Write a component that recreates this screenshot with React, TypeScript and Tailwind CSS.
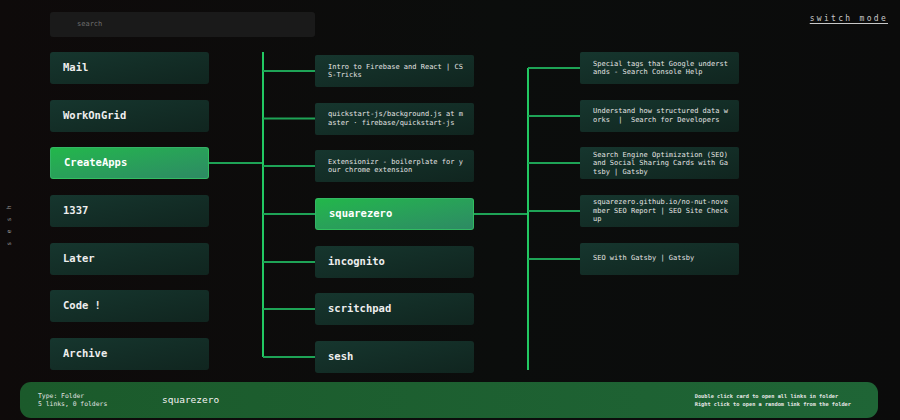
import React from "react";

const folders = ["Mail", "WorkOnGrid", "CreateApps", "1337", "Later", "Code !", "Archive"];
const subFolders = [
  { name: "Intro to Firebase and React | CSS-Tricks", link: true },
  { name: "quickstart-js/background.js at master · firebase/quickstart-js", link: true },
  { name: "Extensionizr - boilerplate for your chrome extension", link: true },
  { name: "squarezero", link: false },
  { name: "incognito", link: false },
  { name: "scritchpad", link: false },
  { name: "sesh", link: false },
];
const links = [
  "Special tags that Google understands - Search Console Help",
  "Understand how structured data works  |  Search for Developers",
  "Search Engine Optimization (SEO) and Social Sharing Cards with Gatsby | Gatsby",
  "squarezero.github.io/no-nut-november SEO Report | SEO Site Checkup",
  "SEO with Gatsby | Gatsby",
];

const mono = "font-['DejaVu_Sans_Mono',monospace]";

function FolderCard({ name, active }: { name: string; active?: boolean }) {
  return (
    <div
      className={`h-[32px] w-[159px] rounded-[3px] flex items-center pl-[13px] text-[10.5px] font-bold ${
        active
          ? "bg-gradient-to-br from-[#22b74a] to-[#2d8a63] border border-[#3bc86a]/60 text-white"
          : "bg-gradient-to-br from-[#16362e] to-[#10251f] text-[#eeeeee]"
      }`}
    >
      {name}
    </div>
  );
}

function LinkCard({ title }: { title: string }) {
  return (
    <div className="h-[32px] w-[159px] rounded-[2px] flex items-center pl-[13px] pr-[10px] bg-gradient-to-br from-[#16362e] to-[#10251f]">
      <p className="text-[7px] leading-[8.5px] text-[#e4e4e4] break-all whitespace-pre-wrap">{title}</p>
    </div>
  );
}

function Connector({ inY, branches, top, bottom }: { inY: number; branches: number[]; top: number; bottom: number }) {
  return (
    <svg width="106" height="330" className="shrink-0">
      <line x1="0" y1={inY} x2="54" y2={inY} stroke="#1ea356" strokeWidth="2" />
      <line x1="54" y1={top} x2="54" y2={bottom} stroke="#22c862" strokeWidth="2" />
      {branches.map((y) => (
        <line key={y} x1="54" y1={y} x2="106" y2={y} stroke="#1ea356" strokeWidth="2" />
      ))}
    </svg>
  );
}

export default function App() {
  return (
    <div className={`w-[900px] h-[420px] overflow-hidden flex flex-col bg-[linear-gradient(90deg,#0e0a0a,#0b0d0c_55%,#0b0b0b)] ${mono}`}>
      <div className="flex items-start justify-between pl-[50px] pr-[12px] pt-[12px]">
        <div className="h-[25px] w-[265px] rounded-[3px] bg-[#1a1a1a] flex items-center pl-[27px] text-[7px] text-[#6e6e6e]">
          search
        </div>
        <span className="mt-[1px] text-[8px] tracking-[2.3px] text-[#c8c8c8] underline underline-offset-[2px]">
          switch mode
        </span>
      </div>

      <div className="flex mt-[15px]">
        <div className="w-[50px] flex items-start pt-[145px] pl-[4px]">
          <span className="[writing-mode:vertical-rl] rotate-180 text-[6px] tracking-[8.5px] text-[#9a9a9a]">sesh</span>
        </div>
        <div className="flex flex-col gap-[15.67px]">
          {folders.map((f) => (
            <FolderCard key={f} name={f} active={f === "CreateApps"} />
          ))}
        </div>
        <Connector inY={111} top={0} bottom={305} branches={[19, 66.5, 114, 162, 210, 257, 305]} />
        <div className="flex flex-col gap-[15.67px] mt-[3px]">
          {subFolders.map((s) =>
            s.link ? <LinkCard key={s.name} title={s.name} /> : <FolderCard key={s.name} name={s.name} active={s.name === "squarezero"} />
          )}
        </div>
        <Connector inY={162} top={16} bottom={318} branches={[16, 64, 111, 159, 207]} />
        <div className="flex flex-col gap-[15.67px]">
          {links.map((l) => (
            <LinkCard key={l} title={l} />
          ))}
        </div>
      </div>

      <div className="mt-auto mb-[2px] mx-[20px] w-[858px] h-[36px] rounded-[11px] bg-gradient-to-r from-[#1b5a2b] to-[#1f6536] flex items-center pl-[18px] pr-[27px]">
        <div className="w-[124px] text-[6.4px] leading-[8px] text-[#e2e2e2]">
          <div>Type: Folder</div>
          <div>5 links, 0 folders</div>
        </div>
        <div className="text-[9.5px] text-[#f2f2f2]">squarezero</div>
        <div className="ml-auto text-[5.3px] leading-[8px] text-[#e6e6e6] font-bold">
          <div>Double click card to open all links in folder</div>
          <div>Right click to open a random link from the folder</div>
        </div>
      </div>
    </div>
  );
}
